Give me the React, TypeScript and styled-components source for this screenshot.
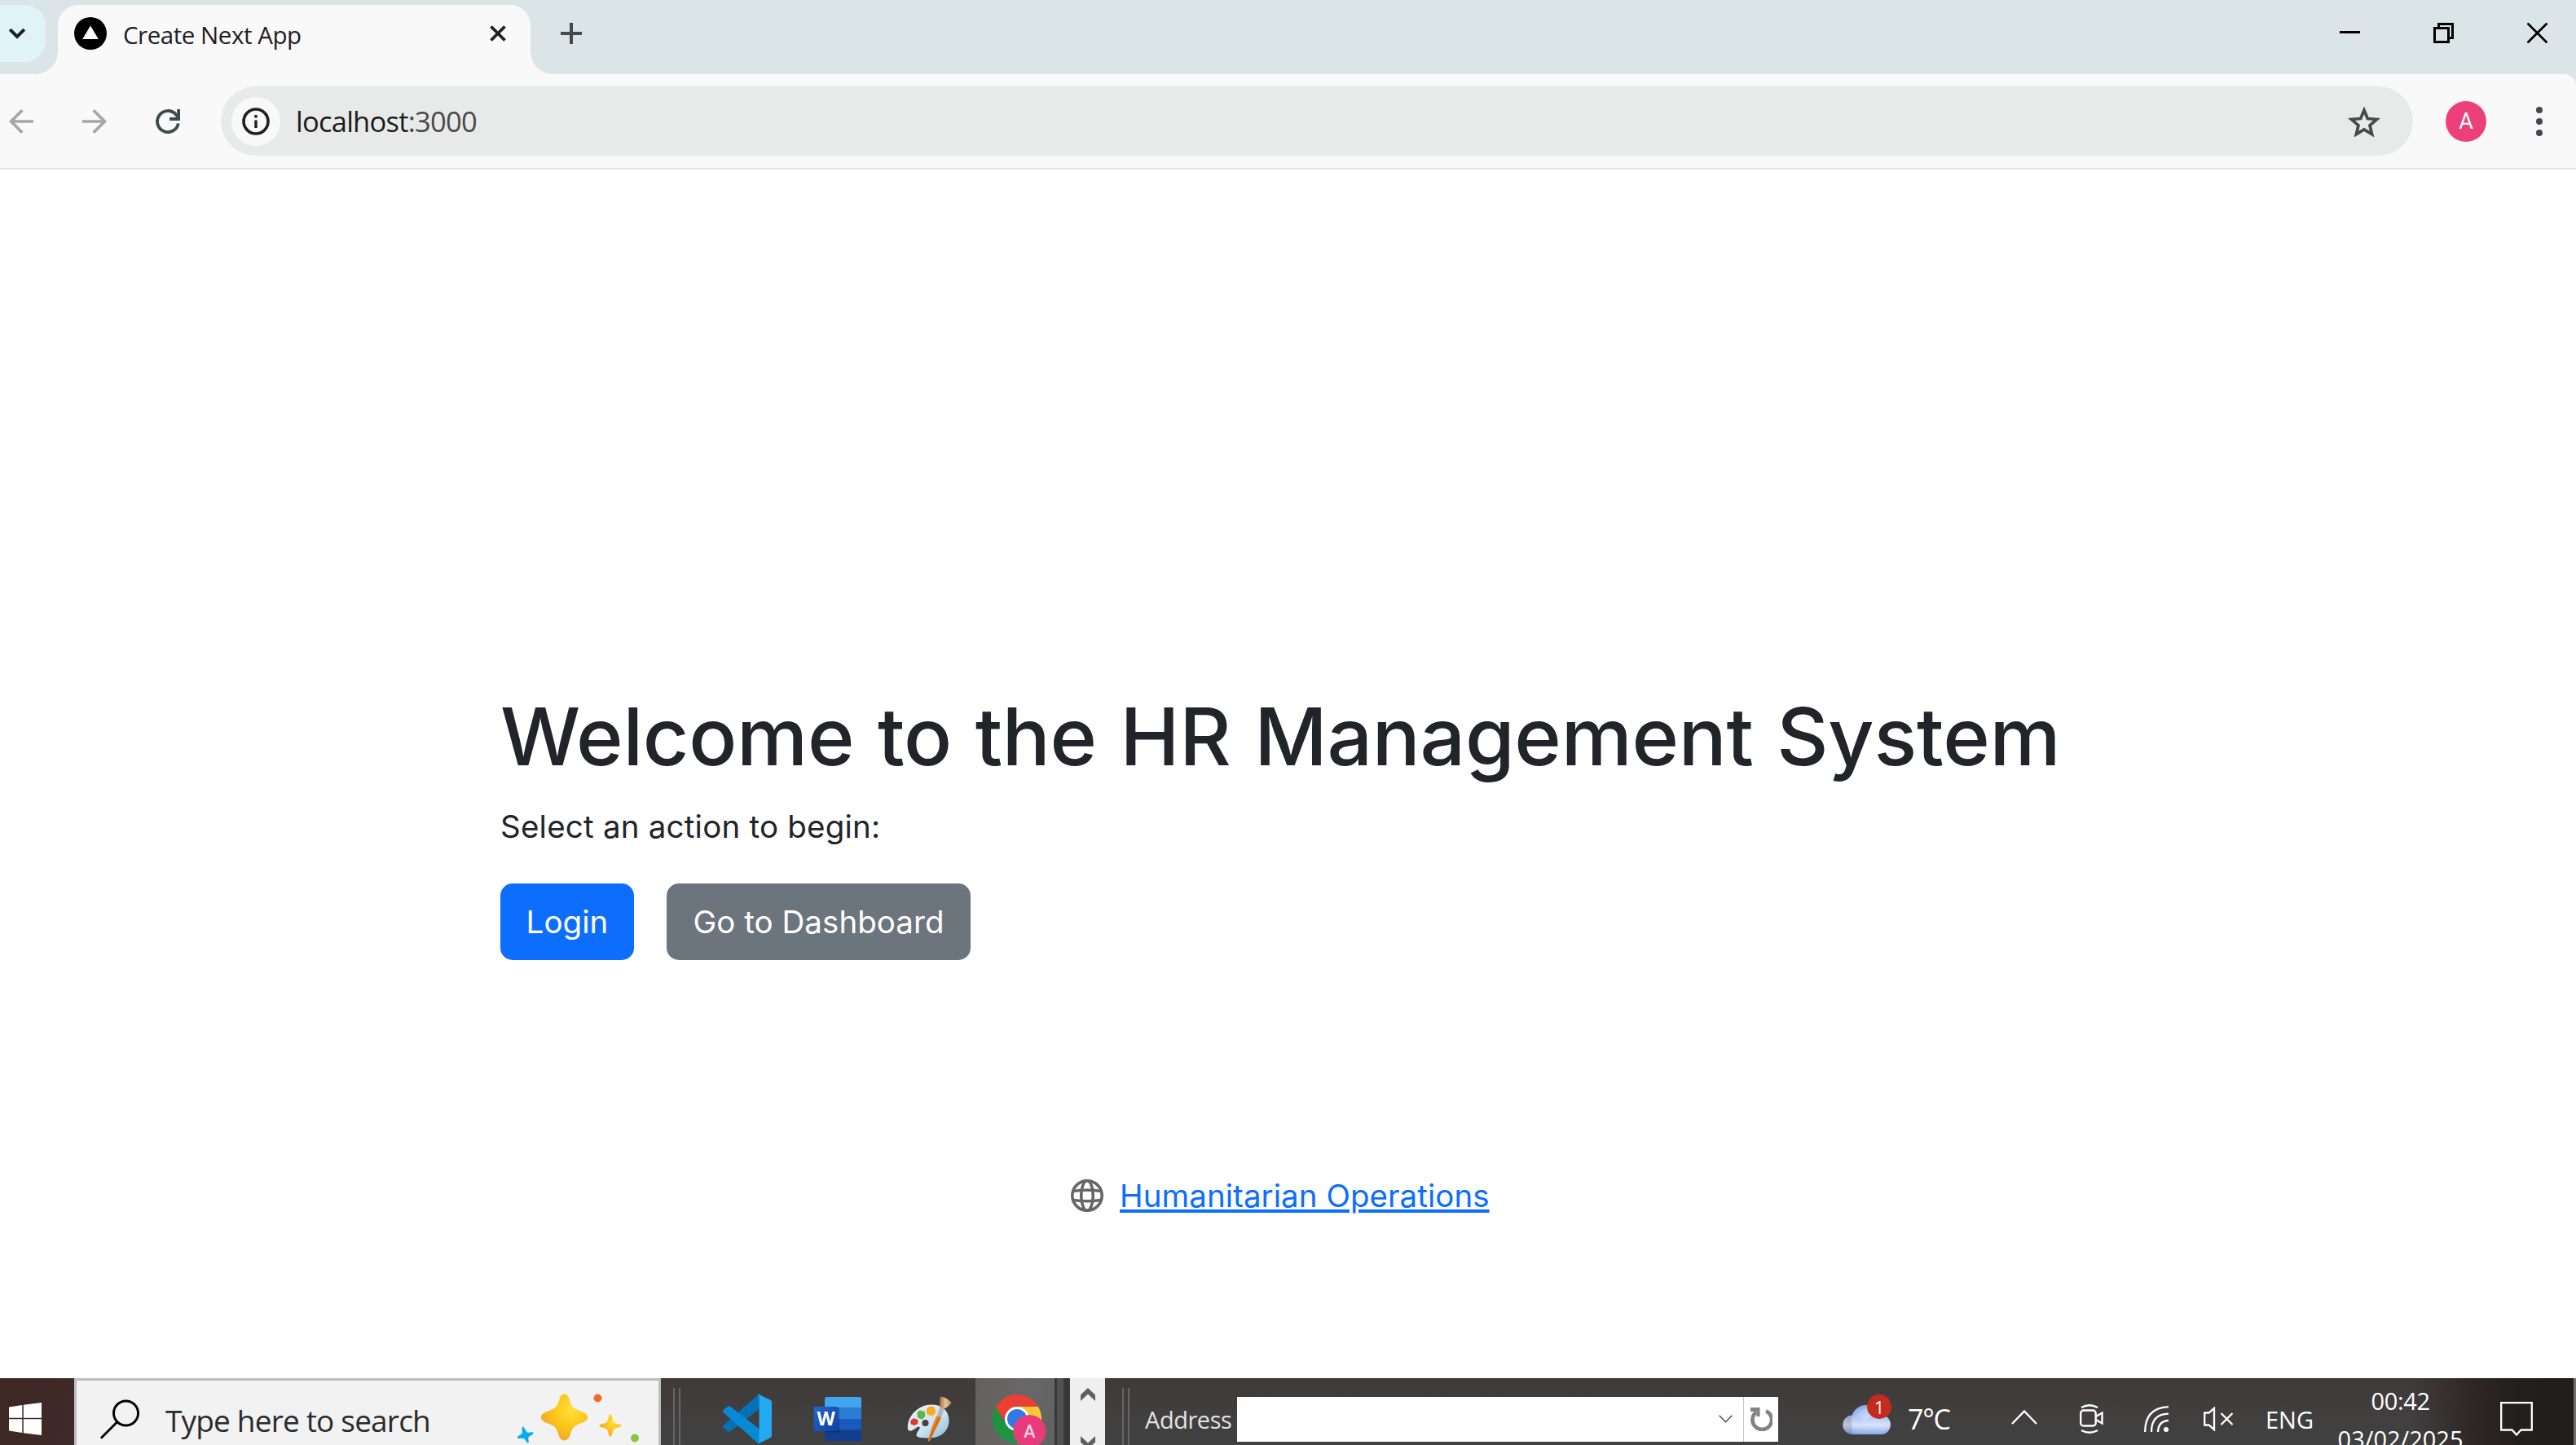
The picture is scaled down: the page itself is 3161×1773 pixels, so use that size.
import React from 'react';
import styled, { createGlobalStyle, css } from 'styled-components';

const GlobalStyle = createGlobalStyle`
  * { box-sizing: border-box; }
  body { margin: 0; background: #fff; overflow: hidden; }
  svg { display: block; flex: none; }
`;

const uiFont = '"Open Sans", "Noto Sans", sans-serif';
const pageFont = 'Inter, "Liberation Sans", sans-serif';

const Screen = styled.div`
  display: flex;
  flex-direction: column;
  width: 3161px;
  height: 1773px;
  overflow: hidden;
  background: #fff;
  white-space: nowrap;
`;

/* ---------- browser chrome ---------- */

const TabStrip = styled.header`
  display: flex;
  align-items: flex-start;
  flex: none;
  height: 91px;
  background: #dbe4e6;
`;

const TabSearch = styled.div`
  display: flex;
  align-items: center;
  width: 56px;
  height: 70px;
  margin: 6px 15px 0 0;
  padding-left: 10px;
  border-radius: 0 25px 25px 0;
  background: #e0f3f8;
`;

const Tab = styled.div`
  position: relative;
  display: flex;
  align-items: center;
  width: 580px;
  height: 85px;
  margin-top: 6px;
  padding: 0 30px 15px 20px;
  border-radius: 25px 25px 0 0;
  background: #f9f9f9;

  &::before,
  &::after {
    content: '';
    position: absolute;
    bottom: 0;
    width: 27px;
    height: 27px;
  }
  &::before {
    right: 100%;
    background: radial-gradient(circle at 0 0, transparent 26.5px, #f9f9f9 27px);
  }
  &::after {
    left: 100%;
    background: radial-gradient(circle at 100% 0, transparent 26.5px, #f9f9f9 27px);
  }
`;

const TabTitle = styled.span`
  flex: 1;
  margin: 4px 0 0 20px;
  font: 400 29.5px/40px ${uiFont};
  letter-spacing: -0.46px;
  color: #1f2021;
`;

const NewTab = styled.div`
  margin: 28px auto 0 37px;
`;

const WindowControls = styled.div`
  display: flex;
  gap: 90px;
  padding: 28px 35px 0 0;
`;

const Toolbar = styled.div`
  display: flex;
  align-items: center;
  flex: none;
  height: 117px;
  padding: 0 41px 0 11px;
  border-top-right-radius: 14px;
  border-bottom: 2px solid #e1e3e3;
  background: #f9f9f9;
`;

const ToolbarBacking = styled.div`
  flex: none;
  background: #dbe4e6;
`;

const NavButtons = styled.nav`
  display: flex;
  gap: 60px;
  margin-right: 50px;
`;

const AddressField = styled.div`
  display: flex;
  align-items: center;
  flex: 1;
  height: 85px;
  padding: 0 40px 0 13px;
  border-radius: 43px;
  background: #e8eae9;
`;

const SiteInfo = styled.div`
  display: grid;
  place-items: center;
  width: 60px;
  height: 60px;
  margin-right: 19px;
  border-radius: 50%;
  background: #f9f9f9;
`;

const Url = styled.div`
  flex: 1;
  font: 400 34.5px/46px ${uiFont};
  letter-spacing: -0.75px;
  color: #1b1c1c;

  span { color: #474a4a; }
`;

const Avatar = styled.div`
  display: grid;
  place-items: center;
  width: 50px;
  height: 50px;
  margin: 0 61px 0 40px;
  border-radius: 50%;
  background: #ec407a;
  color: #fff;
  font: 400 27px/50px Roboto, sans-serif;
`;

/* ---------- page ---------- */

const Page = styled.main`
  display: flex;
  flex-direction: column;
  flex: 1;
  min-height: 0;
  padding: 636px 0 0 614px;
  background: #fff;
  color: #212529;
  font: 400 38.5px/60px ${pageFont};
`;

const Heading = styled.h1`
  margin: 0 0 20px;
  font-size: 98px;
  font-weight: 500;
  line-height: 120px;
  letter-spacing: -0.25px;
  word-spacing: 2.8px;
`;

const Lead = styled.p`
  margin: 0 0 40px;
  letter-spacing: 0.22px;
`;

const Actions = styled.div`
  display: flex;
  gap: 40px;
`;

const Button = styled.button<{ $tone: 'primary' | 'secondary' }>`
  height: 94px;
  padding: 0;
  border: 0;
  border-radius: 15px;
  color: #fff;
  font: inherit;
  letter-spacing: 0.05px;
  ${({ $tone }) =>
    $tone === 'primary'
      ? css`width: 164px; background: #0d6efd;`
      : css`width: 373px; background: #6c757d;`}
`;

const Footer = styled.footer`
  display: flex;
  align-items: center;
  gap: 20px;
  height: 60px;
  margin: 259px 0 0 700px;
`;

const FooterLink = styled.a`
  color: #0d6efd;
  letter-spacing: 0.05px;
  text-decoration: underline;
  text-decoration-thickness: 4px;
  text-underline-offset: 3px;
`;

/* ---------- taskbar ---------- */

const Clip = styled.div`
  flex: none;
  height: 82px;
  overflow: hidden;
`;

const Taskbar = styled.footer`
  display: flex;
  align-items: center;
  height: 100px;
  background:
    linear-gradient(90deg, transparent 2960px, #2c2524 3040px, #231f1e 3090px, #1e1e1d 3158px),
    linear-gradient(#403a39, #414040 60%, #424242);
  color: #fff;
  font: 400 29px/40px ${uiFont};
`;

const Start = styled.div`
  display: flex;
  align-items: center;
  width: 91px;
  height: 100%;
  padding-left: 11px;
  background: linear-gradient(100deg, #3d2721, #3f2a2a);
`;

const SearchBox = styled.div`
  display: flex;
  align-items: center;
  width: 720px;
  height: 100%;
  padding: 0 24.5px 0 29px;
  border: 3px solid #bdbdbd;
  background: #f2f2f2;
`;

const SearchText = styled.span`
  flex: 1;
  margin: 3px 0 0 31px;
  font-size: 37px;
  letter-spacing: -0.82px;
  color: #2b2b2b;
`;

const Grip = styled.div<{ $before: number; $after: number }>`
  align-self: flex-start;
  width: 9px;
  height: 88px;
  margin: 12px ${(p) => p.$after}px 0 ${(p) => p.$before}px;
  border: solid #666464;
  border-width: 0 2px;
`;

const AppSlot = styled.div<{ $width: number; $active?: boolean }>`
  display: grid;
  place-items: center;
  width: ${(p) => p.$width}px;
  height: 100%;
  background: ${(p) => (p.$active ? 'linear-gradient(100deg, #636160, #686767 60%, #626262)' : 'none')};
`;

const StackedEdge = styled.div`
  width: 19px;
  height: 100%;
  border: solid #393838;
  border-width: 0 8px 0 3px;
  background: #525151;
`;

const Scroller = styled.div`
  display: flex;
  flex-direction: column;
  align-items: center;
  gap: 43px;
  width: 43px;
  height: 100%;
  padding-top: 12px;
  background: #efefef;
`;

const BandLabel = styled.span`
  width: 113px;
  margin-top: 2px;
  color: #e2e2e2;
  letter-spacing: -0.46px;
`;

const BandField = styled.div`
  display: flex;
  align-items: center;
  justify-content: flex-end;
  width: 664px;
  height: 55px;
  background: #fff;
`;

const GoButton = styled.div`
  display: grid;
  place-items: center;
  width: 43px;
  height: 55px;
  margin-left: 13px;
  border-left: 1px solid #c9c9c9;
`;

const Weather = styled.div`
  display: flex;
  align-items: center;
  width: 207px;
  margin-left: 79px;
  font-size: 34px;
  letter-spacing: -1.2px;
`;

const WeatherIcon = styled.div`
  position: relative;
  margin: 0 20px 11px 0;
`;

const WeatherBadge = styled.div`
  position: absolute;
  top: 0;
  right: 0;
  width: 30px;
  height: 30px;
  border-radius: 50%;
  background: #c42b1c;
  font-size: 22px;
  line-height: 30px;
  letter-spacing: 0;
  text-align: center;
`;

const Tray = styled.div`
  display: flex;
  align-items: center;
`;

const TrayItem = styled.div<{ $before: number }>`
  margin-left: ${(p) => p.$before}px;
`;

const Language = styled.span`
  margin: 1px 29px 0 39px;
`;

const Clock = styled.div`
  display: flex;
  flex-direction: column;
  align-items: center;
  width: 155px;
  margin: 2px 45px 0 0;
  line-height: 47px;
`;

const TimeText = styled.span`
  letter-spacing: -0.34px;
`;

const ShowDesktop = styled.div`
  width: 3px;
  height: 100%;
  margin-left: auto;
  background: #6f6f6f;
`;

/* ---------- icons ---------- */

const IconTabChevron = () => (
  <svg width="22" height="14" viewBox="0 0 22 14"><path d="M2.2 2.2 11 11l8.800-8.800" fill="none" stroke="#1f2021" strokeWidth="4" /></svg>
);
const IconFavicon = () => (
  <svg width="40" height="40" viewBox="0 0 40 40"><circle cx="20" cy="20" r="20" /><path d="M20 10.500 29.800 27H10.200Z" fill="#fff" /></svg>
);
const IconTabClose = () => (
  <svg width="20" height="20" viewBox="0 0 20 20"><path d="M1.500 1.500l17 17M18.500 1.500l-17 17" stroke="#1f2021" strokeWidth="3.800" /></svg>
);
const IconPlus = () => (
  <svg width="26" height="26" viewBox="0 0 26 26"><path d="M13 0v26M0 13h26" stroke="#444b4d" strokeWidth="4" /></svg>
);
const IconArrow = ({ flip }: { flip?: boolean }) => (
  <svg width="30" height="30" viewBox="0 0 30 30">
    <path d="M30 15H3M16.300 1.300 2.600 15l13.700 13.700" transform={flip ? 'matrix(-1 0 0 1 30 0)' : undefined} fill="none" stroke="#a5a7a7" strokeWidth="3.700" />
  </svg>
);
const IconReload = () => (
  <svg width="30" height="30" viewBox="0 0 30 30">
    <path d="M27.800 17.500A13 13 0 1 1 24.800 6.500L27 9" fill="none" stroke="#3f4a4d" strokeWidth="3.900" />
    <path d="M28.100 0v12H17" fill="none" stroke="#3f4a4d" strokeWidth="3.800" />
  </svg>
);
const IconInfo = () => (
  <svg width="34" height="34" viewBox="0 0 34 34">
    <circle cx="17" cy="17" r="15" fill="none" stroke="#1f2021" strokeWidth="3.600" />
    <path d="M17 15.500V25M17 9v3.600" stroke="#1f2021" strokeWidth="3.400" />
  </svg>
);
const IconStar = () => (
  <svg width="40" height="38" viewBox="0 0 40 38">
    <path d="M20 5.200 24.300 15.500 35.500 16.500 27 23.800 29.600 34.700 20 28.900 10.400 34.700 13 23.800 4.500 16.500 15.700 15.500Z" fill="none" stroke="#474a4a" strokeWidth="3.700" />
  </svg>
);
const IconDots = () => (
  <svg width="8" height="36" viewBox="0 0 8 36" fill="#3f4a4d"><circle cx="4" cy="4" r="4" /><circle cx="4" cy="18" r="4" /><circle cx="4" cy="32" r="4" /></svg>
);
const IconMinimize = () => (
  <svg width="25" height="25" viewBox="0 0 25 25"><path d="M0 10h25v3H0z" /></svg>
);
const IconRestore = () => (
  <svg width="25" height="25" viewBox="0 0 25 25" fill="none" stroke="#000" strokeWidth="3"><path d="M1.500 6.500h17v17h-17z" /><path d="M6.500 6V1.500h17v17H19" /></svg>
);
const IconWindowClose = () => (
  <svg width="25" height="25" viewBox="0 0 25 25"><path d="M.5.5l24 24M24.500.5l-24 24" stroke="#000" strokeWidth="2.700" /></svg>
);
const IconGlobe = () => (
  <svg width="40" height="40" viewBox="0 0 40 40" fill="none" stroke="#666" strokeWidth="3.600">
    <circle cx="20" cy="20" r="18.200" />
    <ellipse cx="20" cy="20" rx="7.300" ry="18.200" />
    <path d="M3.500 14.500Q20 12 36.500 14.500M3.500 25.500Q20 28 36.500 25.500" />
  </svg>
);
const IconWindows = () => (
  <svg width="40" height="40" viewBox="0 0 40 40" fill="#fff">
    <path d="M0 5.500 16.300 3.100V18.800H0zM17.800 2.800 40 0V18.800H17.800zM0 20.300H16.300V37L0 34.600zM17.800 20.300H40V40L17.800 37.200z" />
  </svg>
);
const IconSearch = () => (
  <svg width="49" height="49" viewBox="0 0 49 49" fill="none" stroke="#000" strokeWidth="2.900" strokeLinecap="round"><circle cx="31.500" cy="17" r="15" /><path d="M20.800 27.800 1.800 46.800" /></svg>
);
const IconSparkles = () => (
  <svg width="151" height="62" viewBox="0 0 151 62">
    <defs>
      <radialGradient id="gold" cx=".64" cy=".34" r=".75"><stop offset="0" stopColor="#ffe13c" /><stop offset=".45" stopColor="#fdc81c" /><stop offset="1" stopColor="#f2a027" /></radialGradient>
    </defs>
    <path d="M59.500.5C64 .5 65 5 66.500 10 68.500 16 71 18 77 20.500 82 22.500 88 24 88 29S82 35.500 77 37.500C71 40 69.500 42 67.500 48 66 53 64 57.500 59.500 57.500S53 53 51.500 48C49.500 42 48 40 42 37.500 37 35.500 31 34 31 29S37 22.500 42 20.500C48 18 50.500 16 52.500 10 54 5 55 .5 59.500.5Z" fill="url(#gold)" />
    <path d="M116 25.500c2.500 0 2.500 7.500 4.500 9.500s9 2 9 4.200-7 2.300-9 4.300-2 9-4.500 9-2.500-7-4.500-9-9-2-9-4.300 7-2.200 9-4.200 2-9.500 4.500-9.500Z" fill="url(#gold)" />
    <circle cx="100.500" cy="5.500" r="5" fill="#f26a28" />
    <circle cx="146" cy="54.500" r="5" fill="#8cc63f" />
    <path d="M8.500 40.500c2-.6 3.500 6 5.500 7s7.200-1.500 7.600.5-5.600 3.800-6.200 6 1.500 6-.4 6.300-3.300-4.700-5.300-5.400-7.200 1-7.700-1 5-3.300 5.700-5.300-1-7.500.8-8.100Z" fill="#00adef" />
  </svg>
);
const IconCode = () => (
  <svg width="60" height="60" viewBox="0 0 60 60">
    <path d="M45 0V17.500L9.800 44.800Q7.500 46.800 5.500 45L1 41.300Q-.8 39.500 1 37.500L42 1.500Q43.500 0 45 0Z" fill="#0471b5" />
    <path d="M1 22.500Q-.8 20.500 1 18.800L5.500 15Q7.500 13.500 9.800 15.200L45 42.500V60Q43 60 41.500 58.500Z" fill="#0789d6" />
    <path d="M44.500 0 58.300 6.800Q60 7.700 60 9.500V50.500Q60 52.300 58.300 53.200L44.500 60Q43 60.300 42 58.700 44.500 59.500 44.500 57.500V2.500Q44.500.5 42 1.300 43 0 44.500 0Z" fill="#23a8f2" />
  </svg>
);
const IconWord = () => (
  <svg width="60" height="54" viewBox="0 0 60 54">
    <defs>
      <clipPath id="sheet"><rect x="14" width="45" height="54" rx="2.500" /></clipPath>
      <linearGradient id="tile" x1="0" y1="0" x2="1" y2="1"><stop offset="0" stopColor="#2368c4" /><stop offset="1" stopColor="#0f3fa6" /></linearGradient>
    </defs>
    <g clipPath="url(#sheet)">
      <path fill="#41a5ee" d="M14 0h45v13.500H14z" /><path fill="#2b7cd3" d="M14 13.500h45V27H14z" /><path fill="#185abd" d="M14 27h45v13.500H14z" /><path fill="#103f91" d="M14 40.500h45V54H14z" />
      <path fill="#000" opacity=".22" d="M14 13h18v30.500H14z" />
    </g>
    <rect y="12" x=".5" width="30" height="30" rx="2.500" fill="url(#tile)" />
    <text x="15.500" y="35.200" textAnchor="middle" fontFamily='"Open Sans", sans-serif' fontWeight="700" fontSize="23" fill="#fff">W</text>
  </svg>
);
const IconPaint = () => (
  <svg width="56" height="56" viewBox="0 0 56 56">
    <defs>
      <linearGradient id="palette" x1="0" y1="0" x2="1" y2="1"><stop offset="0" stopColor="#e9f3f8" /><stop offset=".55" stopColor="#cfe5f1" /><stop offset="1" stopColor="#86b9d6" /></linearGradient>
      <linearGradient id="bristle" x1="0" y1="0" x2="1" y2="0"><stop offset="0" stopColor="#9c6b3a" /><stop offset=".5" stopColor="#e6c498" /><stop offset="1" stopColor="#b98a55" /></linearGradient>
    </defs>
    <path d="M1 41C-1 26 13 10.500 30 10.500 43 10.500 51.500 18 51.500 30 51.500 43 41 51.500 27 51.500 19 51.500 11 51.500 11.500 47.500 12 43.500 16.500 40.500 15.500 38 14 35 6 44.500 2.500 42.500Z" fill="url(#palette)" />
    <circle cx="22.500" cy="33" r="4" fill="#454241" />
    <path d="M25 14.500q3-3 5-1.500 4-1 4 2 2 4 0 7-4 4-6 1-4 1-4-3-1-3 1-5.500Z" fill="#f9ad1b" />
    <path d="M13.500 19q3-3 5-.5 4-1 3.500 2.500 1 5-2 6-2 3-4 .5-4 0-3-3.500-1.500-3 .5-5Z" fill="#5cb947" />
    <path d="M5.500 29q3-3 5-.8 3.500 0 3 3 0 3.500-3 4-2 1.500-3 0-3.500 0-3-3-1-2 1-3.200Z" fill="#e2352c" />
    <path d="M37 23.500 42.300 26Q40 33 34 43 30 52 27.500 55.500 25.500 56 26 53.500 27.500 48 30 40 33.500 29 37 23.500Z" fill="#e5862a" />
    <path d="M39.500 26 36 34Q31 44 28 53" stroke="#b55f14" strokeWidth="1.300" fill="none" />
    <path d="M40.500 13 45.500 15.500 42.300 26 37 23.500Z" fill="#b3b6b9" />
    <path d="M41 .5Q39.500 8 40 13L45.800 15.500Q51 13 54.500 8.500 50 2 41 .5Z" fill="url(#bristle)" />
  </svg>
);
const IconChrome = () => (
  <svg width="77" height="72" viewBox="-11 -6 77 72">
    <path d="M30 15H56A30 30 0 0 1 30 60L43 37.500Z" fill="#fcc934" />
    <path d="M4 15 17 37.500 43 37.500 30 60A30 30 0 0 1 4 15Z" fill="#1e9442" />
    <path d="M4 15A30 30 0 0 1 56 15H30V30H12.700Z" fill="#ea4033" />
    <circle cx="30" cy="30" r="15" fill="#fff" />
    <circle cx="30" cy="30" r="12" fill="#3079e8" />
    <circle cx="45.300" cy="45" r="20" fill="#e93b7b" />
    <text x="45.300" y="52.500" textAnchor="middle" fontFamily="Roboto, sans-serif" fontWeight="500" fontSize="22" fill="#fbd3e2">A</text>
  </svg>
);
const IconScroll = ({ down }: { down?: boolean }) => (
  <svg width="18" height="16" viewBox="0 0 18 16"><path d={down ? 'M0 0 9 8.500 18 0V7.500L9 16 0 7.500Z' : 'M0 16 9 7.500 18 16V8.500L9 0 0 8.500Z'} fill="#606060" /></svg>
);
const IconDropdown = () => (
  <svg width="17" height="10" viewBox="0 0 17 10"><path d="M.7.7 8.500 8.700 16.300.7" fill="none" stroke="#444" strokeWidth="1.300" /></svg>
);
const IconGo = () => (
  <svg width="28" height="29" viewBox="0 0 28 29">
    <path d="M8 5.800A11.800 11.800 0 1 0 20 4.300" fill="none" stroke="#828282" strokeWidth="4.600" />
    <path d="M1 0h11.500v11H8.500V5L1 5Z" fill="#828282" />
  </svg>
);
const IconCloud = () => (
  <svg width="60" height="49" viewBox="0 0 60 49">
    <defs>
      <radialGradient id="back" cx=".5" cy=".6" r=".65"><stop offset="0" stopColor="#d5e3fb" /><stop offset=".6" stopColor="#b9cff7" /><stop offset="1" stopColor="#7ea3ee" /></radialGradient>
      <linearGradient id="front" x1="0" y1="0" x2="0" y2="1"><stop offset="0" stopColor="#9fbbf0" /><stop offset=".55" stopColor="#dbe7fb" /><stop offset="1" stopColor="#7c9fe9" /></linearGradient>
    </defs>
    <path d="M11 31A18 18 0 0 1 46 25 12 12 0 0 1 48 49H12Z" fill="url(#back)" />
    <path d="M12 49A11.700 11.700 0 0 1 12 25.500C20 24 25 30 28 33 34 24 46 22 52 26.500A12 12 0 0 1 48 49Z" fill="url(#front)" opacity=".8" />
  </svg>
);
const IconTrayUp = () => (
  <svg width="32" height="22" viewBox="0 0 32 22"><path d="M1 17 16 1.500 31 17" fill="none" stroke="#fff" strokeWidth="2.400" /></svg>
);
const IconCamera = () => (
  <svg width="29" height="36" viewBox="0 0 29 36" fill="none" stroke="#fff" strokeWidth="2.400">
    <rect x="1.200" y="7.500" width="18.500" height="19" rx="3.500" /><path d="M20 15l7.500-4.500v13L20 19" /><path d="M2 4Q12 -1.500 22 4M2 32Q12 37.500 22 32" />
  </svg>
);
const IconWifi = () => (
  <svg width="31" height="32" viewBox="0 0 31 32" fill="none" stroke="#fff" strokeWidth="2.300">
    <path d="M1.200 32Q1 2.500 30 1.200M9 32Q9 10 30 9.700M17 32Q17.500 18.500 30 18" /><circle cx="27" cy="29" r="3" fill="#fff" stroke="none" />
  </svg>
);
const IconMuted = () => (
  <svg width="37" height="30" viewBox="0 0 37 30" fill="none" stroke="#fff" strokeWidth="2.300">
    <path d="M1.200 7.500H6.500L13 1.800V28.200L6.500 22.500H1.200Z" /><path d="M21.500 8 35.500 22M35.500 8l-14 14" />
  </svg>
);
const IconNotifications = () => (
  <svg width="40" height="42" viewBox="0 0 40 42" fill="none" stroke="#fff" strokeWidth="2.300"><path d="M1.200 1.200H38.800V34.500H25.500L20 40.500 14.500 34.500H1.200Z" /></svg>
);

export default function App() {
  return (
    <>
      <GlobalStyle />
      <Screen>
        <TabStrip>
          <TabSearch><IconTabChevron /></TabSearch>
          <Tab>
            <IconFavicon />
            <TabTitle>Create Next App</TabTitle>
            <IconTabClose />
          </Tab>
          <NewTab><IconPlus /></NewTab>
          <WindowControls>
            <IconMinimize />
            <IconRestore />
            <IconWindowClose />
          </WindowControls>
        </TabStrip>
        <ToolbarBacking>
          <Toolbar>
            <NavButtons>
              <IconArrow />
              <IconArrow flip />
              <IconReload />
            </NavButtons>
            <AddressField>
              <SiteInfo><IconInfo /></SiteInfo>
              <Url>localhost<span>:3000</span></Url>
              <IconStar />
            </AddressField>
            <Avatar>A</Avatar>
            <IconDots />
          </Toolbar>
        </ToolbarBacking>

        <Page>
          <Heading>Welcome to the HR Management System</Heading>
          <Lead>Select an action to begin:</Lead>
          <Actions>
            <Button $tone="primary">Login</Button>
            <Button $tone="secondary">Go to Dashboard</Button>
          </Actions>
          <Footer>
            <IconGlobe />
            <FooterLink>Humanitarian Operations</FooterLink>
          </Footer>
        </Page>

        <Clip>
          <Taskbar>
            <Start><IconWindows /></Start>
            <SearchBox>
              <IconSearch />
              <SearchText>Type here to search</SearchText>
              <IconSparkles />
            </SearchBox>
            <Grip $before={15} $after={26} />
            <AppSlot $width={111}><IconCode /></AppSlot>
            <AppSlot $width={112}><IconWord /></AppSlot>
            <AppSlot $width={113}><IconPaint /></AppSlot>
            <AppSlot $width={97} $active><IconChrome /></AppSlot>
            <StackedEdge />
            <Scroller>
              <IconScroll />
              <IconScroll down />
            </Scroller>
            <Grip $before={21} $after={19} />
            <BandLabel>Address</BandLabel>
            <BandField>
              <IconDropdown />
              <GoButton><IconGo /></GoButton>
            </BandField>
            <Weather>
              <WeatherIcon>
                <IconCloud />
                <WeatherBadge>1</WeatherBadge>
              </WeatherIcon>
              7°C
            </Weather>
            <Tray>
              <TrayItem $before={0}><IconTrayUp /></TrayItem>
              <TrayItem $before={52}><IconCamera /></TrayItem>
              <TrayItem $before={50}><IconWifi /></TrayItem>
              <TrayItem $before={42}><IconMuted /></TrayItem>
              <Language>ENG</Language>
              <Clock>
                <TimeText>00:42</TimeText>
                <span>03/02/2025</span>
              </Clock>
              <IconNotifications />
            </Tray>
            <ShowDesktop />
          </Taskbar>
        </Clip>
      </Screen>
    </>
  );
}
